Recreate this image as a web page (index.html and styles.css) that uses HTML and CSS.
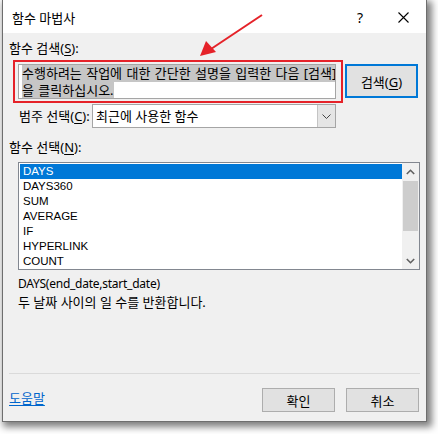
FILE: index.html
```html
<!DOCTYPE html>
<html lang="ko">
<head>
<meta charset="utf-8">
<title>함수 마법사</title>
<link rel="stylesheet" href="styles.css">
</head>
<body>
<div class="dialog">
  <div class="titlebar">
    <span class="title">함수 마법사</span>
    <span class="help-q">?</span>
    <span class="close">
      <svg width="11" height="11" viewBox="0 0 11 11"><path d="M0.5 0.5 L10.5 10.5 M10.5 0.5 L0.5 10.5" stroke="#000" stroke-width="1.1" fill="none"/></svg>
    </span>
  </div>
  <div class="content">
    <div class="label l-search">함수 검색(<u>S</u>):</div>
    <div class="search-row">
      <div class="search-box">
        <span class="sel">수행하려는 작업에 대한 간단한 설명을 입력한 다음 [검색]</span><br><span class="sel">을 클릭하십시오.</span>
      </div>
      <button class="btn btn-search">검색(<u>G</u>)</button>
    </div>
    <div class="cat-row">
      <span class="cat-label">범주 선택(<u>C</u>):</span>
      <div class="select">
        <span class="select-text">최근에 사용한 함수</span>
        <span class="drop">
          <svg width="9" height="5" viewBox="0 0 9 5"><path d="M0.5 0.5 L4.5 4.5 L8.5 0.5" stroke="#444" stroke-width="1" fill="none"/></svg>
        </span>
      </div>
    </div>
    <div class="label l-list">함수 선택(<u>N</u>):</div>
    <div class="listbox">
      <ul class="items">
        <li class="selected">DAYS</li>
        <li>DAYS360</li>
        <li>SUM</li>
        <li>AVERAGE</li>
        <li>IF</li>
        <li>HYPERLINK</li>
        <li>COUNT</li>
      </ul>
      <div class="scrollbar">
        <span class="arrow">
          <svg width="9" height="6" viewBox="0 0 9 6"><path d="M0.8 5 L4.5 1.3 L8.2 5" stroke="#606060" stroke-width="1.6" fill="none"/></svg>
        </span>
        <div class="track"><div class="thumb"></div></div>
        <span class="arrow">
          <svg width="9" height="6" viewBox="0 0 9 6"><path d="M0.8 1 L4.5 4.7 L8.2 1" stroke="#606060" stroke-width="1.6" fill="none"/></svg>
        </span>
      </div>
    </div>
    <div class="desc">
      <div class="sig">DAYS(end_date,start_date)</div>
      <div>두 날짜 사이의 일 수를 반환합니다.</div>
    </div>
    <div class="sep"></div>
    <div class="footer">
      <a class="helplink" href="#">도움말</a>
      <div class="buttons">
        <button class="btn btn-foot">확인</button>
        <button class="btn btn-foot">취소</button>
      </div>
    </div>
  </div>
</div>
<div class="annot-box"></div>
<svg class="annot-arrow" width="80" height="60" viewBox="0 0 80 60">
  <path d="M64 2 L13 36" stroke="#e52229" stroke-width="2" fill="none"/>
  <path d="M2 43 L8 28 L18 39 Z" fill="#e52229"/>
</svg>
</body>
</html>
```
FILE: styles.css
```css
html, body {
  margin: 0;
  padding: 0;
  background: #ffffff;
}
body {
  font-family: "Noto Sans", "Noto Sans CJK KR", sans-serif;
  font-size: 13px;
  color: #000;
  position: relative;
  width: 438px;
  height: 434px;
  overflow: hidden;
}
.dialog {
  box-sizing: border-box;
  margin-left: 2px;
  width: 425px;
  height: 422px;
  background: #f0f0f0;
  border: 1px solid #6e6e6e;
  border-top: none;
  box-shadow: 3px 3px 7px 2px rgba(0, 0, 0, 0.5);
  display: flex;
  flex-direction: column;
}
.titlebar {
  height: 33px;
  background: #ffffff;
  display: flex;
  align-items: center;
  flex-shrink: 0;
}
.title {
  margin-left: 9px;
  line-height: 16px;
  padding-top: 2px;
}
.help-q {
  margin-left: auto;
  margin-right: 35px;
  font-size: 14px;
  padding-top: 2px;
}
.close {
  display: flex;
  margin-right: 17px;
  padding-top: 2px;
}
.content {
  flex: 1;
  display: flex;
  flex-direction: column;
}
.label {
  line-height: 16px;
  margin-left: 6px;
}
.l-search { margin-top: 7px; }
.l-list { margin-top: 11px; }
u { text-decoration: underline; text-underline-offset: 2px; }
.search-row {
  margin-top: 8px;
  display: flex;
  align-items: flex-start;
  height: 35px;
}
.search-box {
  box-sizing: border-box;
  margin-left: 15px;
  width: 318px;
  height: 35px;
  background: #ffffff;
  border: 1px solid #a5a5a5;
  padding: 0 0 0 3px;
  line-height: 17px;
  white-space: nowrap;
  overflow: hidden;
  word-spacing: 1px;
}
.sel {
  background: #c6c6c6;
}
.btn {
  font-family: "Noto Sans", "Noto Sans CJK KR", sans-serif;
  font-size: 13px;
  color: #000;
  background: #e1e1e1;
  border: 1px solid #adadad;
  padding: 0;
  margin: 0;
  box-sizing: border-box;
}
.btn-search {
  margin-left: 9px;
  width: 73px;
  height: 34px;
  border: 2px solid #0078d7;
}
.cat-row {
  margin-top: 5px;
  display: flex;
  align-items: center;
  height: 24px;
}
.cat-label {
  margin-left: 16px;
  width: 73px;
  line-height: 16px;
}
.select {
  box-sizing: border-box;
  width: 244px;
  height: 24px;
  background: #ffffff;
  border: 1px solid #a5a5a5;
  display: flex;
  align-items: center;
}
.select-text {
  margin-left: 3px;
  flex: 1;
  line-height: 16px;
}
.drop {
  box-sizing: border-box;
  width: 18px;
  height: 22px;
  background: #e5e5e5;
  border-left: 1px solid #c4c4c4;
  display: flex;
  align-items: center;
  justify-content: center;
}
.listbox {
  box-sizing: border-box;
  margin-top: 7px;
  margin-left: 15px;
  width: 402px;
  height: 108px;
  border: 1px solid #828790;
  background: #ffffff;
  display: flex;
  padding: 1px 0 0 1px;
}
.items {
  list-style: none;
  margin: 0;
  padding: 0;
  flex: 1;
  font-family: "Liberation Sans", Arial, sans-serif;
  font-size: 11.5px;
}
.items li {
  height: 15px;
  line-height: 15px;
  padding-left: 3px;
}
.items li.selected {
  background: #0078d7;
  color: #ffffff;
}
.scrollbar {
  width: 17px;
  background: #f0f0f0;
  display: flex;
  flex-direction: column;
  margin-top: -1px;
}
.arrow {
  height: 17px;
  display: flex;
  align-items: center;
  justify-content: center;
}
.track {
  flex: 1;
  padding-top: 1px;
}
.thumb {
  width: 15px;
  margin-left: 1px;
  height: 50px;
  background: #cdcdcd;
}
.desc {
  margin-top: 4px;
  margin-left: 15px;
  height: 99px;
  line-height: 19px;
}
.sig {
  font-size: 12px;
  letter-spacing: -0.25px;
}
.sep {
  margin-left: 6px;
  width: 411px;
  height: 1px;
  background: #dadada;
}
.footer {
  margin-top: 14px;
  display: flex;
  align-items: center;
  height: 24px;
}
.helplink {
  margin-left: 6px;
  color: #0066cc;
  text-decoration: underline;
  text-underline-offset: 2px;
  line-height: 16px;
  margin-top: -4px;
}
.buttons {
  margin-left: auto;
  margin-right: 7px;
  display: flex;
  gap: 11px;
}
.btn-foot {
  width: 73px;
  height: 24px;
}
.annot-box {
  position: absolute;
  left: 13px;
  top: 60px;
  width: 330px;
  height: 43px;
  box-sizing: border-box;
  border: 2px solid #e52229;
}
.annot-arrow {
  position: absolute;
  left: 198px;
  top: 13px;
}
```
